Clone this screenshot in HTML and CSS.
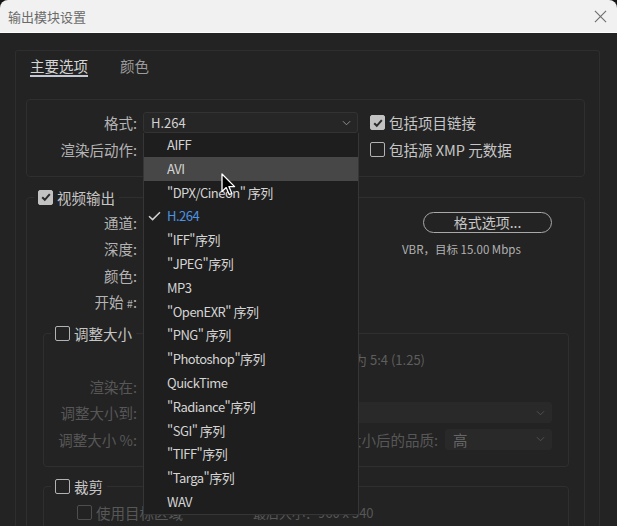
FILE: index.html
```html
<!DOCTYPE html>
<html lang="zh-CN">
<head>
    <meta charset="UTF-8">
    <title>输出模块设置</title>
    <link rel="stylesheet" href="styles.css">
</head>
<body>
  <div class="dialog">
    <!-- title bar -->
    <div class="titlebar">
      <span class="title">输出模块设置</span>
      <svg class="close" viewBox="0 0 14 14"><path d="M1 1L13 13M13 1L1 13" stroke="#6e6e6e" stroke-width="1.2" fill="none"/></svg>
    </div>

    <div class="content">
      <div class="panel">
        <div class="tabs">
          <span class="tab active">主要选项</span>
          <span class="tab">颜色</span>
        </div>

        <!-- format -->
        <div class="group format-group">
          <div class="row">
            <span class="lbl">格式:</span>
            <div class="select">H.264<svg class="chev" viewBox="0 0 10 6"><path d="M1 1L5 5L9 1" stroke="#9a9a9a" fill="none"/></svg></div>
            <span class="check"><span class="box on"><svg viewBox="0 0 12 12"><path d="M2.2 6.2L4.8 8.8L9.8 3.2" stroke="#2b2b2b" stroke-width="2" fill="none"/></svg></span>包括项目链接</span>
          </div>
          <div class="row">
            <span class="lbl">渲染后动作:</span>
            <!-- covered by the open menu -->
            <div class="select"></div>
            <span class="check"><span class="box"></span>包括源 XMP 元数据</span>
          </div>
        </div>

        <!-- video output -->
        <fieldset class="group video-group">
          <legend><span class="box on"><svg viewBox="0 0 12 12"><path d="M2.2 6.2L4.8 8.8L9.8 3.2" stroke="#2b2b2b" stroke-width="2" fill="none"/></svg></span>视频输出</legend>
          <div class="vrow">
            <span class="lbl">通道:</span>
            <div class="select"></div>
            <button class="pill">格式选项...</button>
          </div>
          <div class="vrow">
            <span class="lbl">深度:</span>
            <div class="select"></div>
            <span class="vbr">VBR，目标 15.00 Mbps</span>
          </div>
          <div class="vrow">
            <span class="lbl">颜色:</span>
            <div class="select"></div>
          </div>
          <div class="vrow">
            <span class="lbl">开始 <small>#</small>:</span>
            <div class="field"></div>
          </div>

          <fieldset class="group sub-group">
            <legend><span class="box"></span>调整大小</legend>
            <div class="srow">
              <span class="lbl"></span>
              <span class="aspect">为 5:4 (1.25)</span>
            </div>
            <div class="srow dim">
              <span class="lbl">渲染在:</span>
              <div class="select dark"></div>
            </div>
            <div class="srow dim">
              <span class="lbl">调整大小到:</span>
              <div class="select dark wide"><span></span><svg class="chev" viewBox="0 0 10 6"><path d="M1 1L5 5L9 1" stroke="#555" fill="none"/></svg></div>
            </div>
            <div class="srow dim">
              <span class="lbl">调整大小 %:</span>
              <div class="field dark"></div>
              <span class="quality">调整大小后的品质:</span>
              <div class="select dark short">高<svg class="chev" viewBox="0 0 10 6"><path d="M1 1L5 5L9 1" stroke="#555" fill="none"/></svg></div>
            </div>
          </fieldset>

          <fieldset class="group sub-group">
            <legend><span class="box"></span>裁剪</legend>
            <div class="srow dim crop-row">
              <span class="crop-check"><span class="box faint"></span>使用目标区域</span>
              <span class="final">最后大小：960 x 540</span>
            </div>
          </fieldset>
        </fieldset>
      </div>
    </div>

    <!-- open format menu -->
    <ul class="menu">
      <li>AIFF</li>
      <li class="hover">AVI</li>
      <li>"DPX/Cineon" 序列</li>
      <li class="current"><svg class="tick" viewBox="0 0 13 10"><path d="M1 5.2L4.6 8.6L12 1.2" stroke="#cfcfcf" stroke-width="1.5" fill="none"/></svg>H.264</li>
      <li>"IFF"序列</li>
      <li>"JPEG"序列</li>
      <li>MP3</li>
      <li>"OpenEXR" 序列</li>
      <li>"PNG" 序列</li>
      <li>"Photoshop"序列</li>
      <li>QuickTime</li>
      <li>"Radiance"序列</li>
      <li>"SGI" 序列</li>
      <li>"TIFF"序列</li>
      <li>"Targa"序列</li>
      <li>WAV</li>
    </ul>

    <svg class="cursor" viewBox="0 0 15 24"><path d="M1 1L1 18.5L5.2 14.6L8.2 21.6L10.8 20.5L7.9 13.6L13.6 13.6Z" fill="#000" stroke="#fff" stroke-width="1.3" stroke-linejoin="round"/></svg>
  </div>
</body>
</html>
```

FILE: styles.css
```css
* {
  box-sizing: border-box;
}

body {
  margin: 0;
  background: #151515;
  font-family: "Noto Sans CJK SC", "Noto Sans", sans-serif;
}

.dialog {
  position: relative;
  width: 617px;
  height: 526px;
  overflow: hidden;
  border-radius: 8px 8px 0 0;
  background: #232323;
}

/* title bar */
.titlebar {
  height: 33px;
  background: #f1f1f1;
  border-bottom: 1px solid #fcfcfc;
  display: flex;
  align-items: center;
  justify-content: space-between;
  padding: 0 10px 0 8px;
}

.title {
  font-size: 13px;
  color: #6a6a6a;
}

.close {
  width: 13px;
  height: 13px;
}

.content {
  padding: 17px 17px 0 15px;
}

.panel {
  height: 480px;
  border: 1px solid #2e2e2e;
  border-bottom: none;
  border-radius: 3px 3px 0 0;
  padding: 6px 14px 0 10px;
}

/* tabs */
.tabs {
  display: flex;
  gap: 32px;
  padding-left: 4px;
}

.tab {
  font-size: 14.5px;
  line-height: 18px;
  color: #9c9c9c;
}

.tab.active {
  color: #d4d4d4;
  border-bottom: 2px solid #c4c8d2;
}

/* groups */
.group {
  border: 1px solid #2f2f2f;
  border-radius: 4px;
  margin: 0;
  min-width: 0;
}

.format-group {
  margin-top: 22px;
  padding: 9px 0 13px;
}

.row {
  display: flex;
  align-items: center;
  height: 27px;
}

.lbl {
  flex: none;
  width: 110px;
  text-align: right;
  font-size: 14.5px;
  color: #b4b4b4;
}

.lbl small {
  font-size: 11px;
}

.select {
  flex: none;
  display: flex;
  align-items: center;
  justify-content: space-between;
  margin-left: 6px;
  width: 215px;
  height: 21px;
  padding: 0 6px 0 7px;
  background: #262626;
  border: 1px solid #333;
  border-radius: 3px;
  font-size: 13px;
  color: #d2d2d2;
}

.chev {
  width: 9px;
  height: 6px;
}

.check {
  display: flex;
  align-items: center;
  gap: 4px;
  margin-left: 12px;
  font-size: 14.5px;
  color: #c6c6c6;
}

.box {
  flex: none;
  display: inline-flex;
  align-items: center;
  justify-content: center;
  width: 15px;
  height: 15px;
  border: 1.5px solid #b2b2b2;
  border-radius: 2px;
}

.box.on {
  background: #c2c2c2;
  border-color: #c2c2c2;
}

.box svg {
  width: 12px;
  height: 12px;
}

.box.faint {
  border-color: #4e4e4e;
}

legend {
  display: flex;
  align-items: center;
  gap: 4px;
  height: 20px;
  margin-left: 7px;
  padding: 0 4px;
  font-size: 14.5px;
  color: #c6c6c6;
}

/* video output */
.video-group {
  margin-top: 10px;
  padding: 2px 0 0;
  height: 400px;
}

.vrow {
  display: flex;
  align-items: center;
  height: 26.5px;
}

.field {
  flex: none;
  margin-left: 6px;
  width: 70px;
  height: 21px;
  padding-left: 7px;
  background: #262626;
  border-radius: 3px;
  font-size: 13px;
  line-height: 21px;
  color: #d2d2d2;
}

.pill {
  margin-left: 65px;
  width: 129px;
  height: 21px;
  padding: 0;
  background: transparent;
  border: 1.5px solid #a9a9a9;
  border-radius: 11px;
  font-family: inherit;
  font-size: 14px;
  line-height: 17px;
  color: #c8c8c8;
}

.vbr {
  margin-left: 44px;
  font-size: 11.5px;
  color: #b2b2b2;
}

.sub-group {
  margin: 8px 15px 0 16px;
  padding: 3.5px 16px 13px 0;
}

.sub-group + .sub-group {
  margin-top: 10px;
  padding: 3px 16px 0 0;
  height: 80px;
}

.sub-group .lbl {
  width: 93px;
}

.srow {
  display: flex;
  align-items: center;
  height: 26.5px;
}

.aspect {
  margin-left: 6px;
  width: 282px;
  text-align: right;
  font-size: 13px;
  color: #5e5e5e;
}

.dim .lbl,
.dim .quality,
.dim .crop-check,
.dim .final {
  color: #575757;
}

.select.dark,
.field.dark {
  background: #292929;
  border-color: #292929;
  color: #666;
}

.select.wide {
  flex: 1;
  width: auto;
}

.quality {
  flex: 1;
  text-align: right;
  font-size: 14.5px;
}

.select.short {
  margin-left: 7px;
  width: 107px;
  font-size: 14.5px;
}

.crop-row {
  padding-left: 33px;
}

.crop-check {
  flex: none;
  display: flex;
  align-items: center;
  gap: 4px;
  width: 176px;
  font-size: 14.5px;
}

.final {
  font-size: 13px;
}

/* dropdown list */
.menu {
  position: absolute;
  left: 143px;
  top: 133px;
  width: 216px;
  margin: 0;
  padding: 0;
  list-style: none;
  background: #1e1e1e;
  border: 1px solid #363636;
  border-top: none;
}

.menu li {
  position: relative;
  height: 23.8px;
  line-height: 23.8px;
  padding-left: 23px;
  font-size: 13px;
  letter-spacing: -0.5px;
  color: #d4d4d4;
}

.menu li.hover {
  background: #474747;
}

.menu li.current {
  color: #4d92e3;
}

.tick {
  position: absolute;
  left: 4px;
  top: 7px;
  width: 13px;
  height: 10px;
}

.cursor {
  position: absolute;
  left: 221px;
  top: 173px;
  width: 15px;
  height: 24px;
}
```
